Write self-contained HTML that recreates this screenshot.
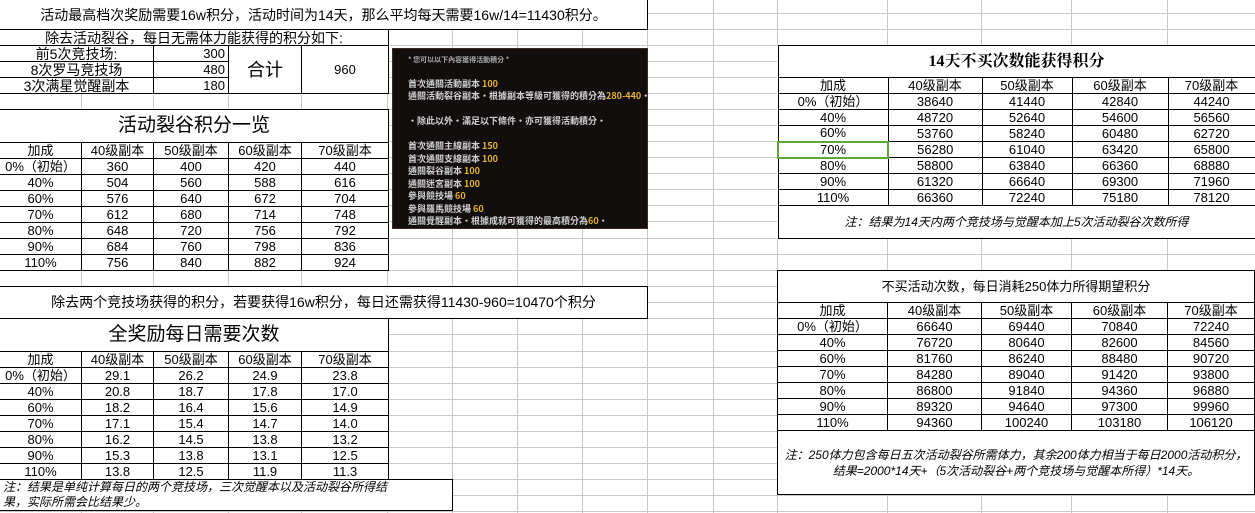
<!DOCTYPE html>
<html><head><meta charset="utf-8">
<style>
*{margin:0;padding:0;box-sizing:border-box}
body{width:1255px;height:513px;overflow:hidden;background:#fff;position:relative;font-family:"Liberation Sans","Noto Sans CJK SC",sans-serif;color:#000}
.abs{position:absolute}
table{position:absolute;border-collapse:collapse;table-layout:fixed;background:#fff}
td{border:1px solid #000;text-align:center;font-size:13px;height:16px;line-height:14px;padding:0;white-space:nowrap;overflow:hidden}
.box{position:absolute;border:1px solid #000;background:#fff;text-align:center;font-size:13px}
.img{position:absolute;left:392px;top:48px;width:256px;height:181px;background:#110e0d;border:1px solid #3a2a22;color:#d0d0d0;font-size:9px;font-weight:bold;font-family:"Noto Sans CJK TC",sans-serif}
.img div{position:absolute;left:15px;white-space:nowrap;line-height:11px}
.y{color:#e5b32c}
</style></head><body>
<svg class="abs" style="left:0;top:0" width="1255" height="513">
<g stroke="#c8c8c8" stroke-width="1">
<line x1="81.5" y1="0" x2="81.5" y2="513"/><line x1="153.5" y1="0" x2="153.5" y2="513"/><line x1="228.5" y1="0" x2="228.5" y2="513"/><line x1="301.5" y1="0" x2="301.5" y2="513"/><line x1="387.5" y1="0" x2="387.5" y2="513"/><line x1="452.5" y1="0" x2="452.5" y2="513"/><line x1="517.5" y1="0" x2="517.5" y2="513"/><line x1="582.5" y1="0" x2="582.5" y2="513"/><line x1="647.5" y1="0" x2="647.5" y2="513"/><line x1="713.5" y1="0" x2="713.5" y2="513"/><line x1="777.5" y1="0" x2="777.5" y2="513"/><line x1="887.5" y1="0" x2="887.5" y2="513"/><line x1="981.5" y1="0" x2="981.5" y2="513"/><line x1="1071.5" y1="0" x2="1071.5" y2="513"/><line x1="1167.5" y1="0" x2="1167.5" y2="513"/>
<line x1="0" y1="13.5" x2="1255" y2="13.5"/><line x1="0" y1="29.5" x2="1255" y2="29.5"/><line x1="0" y1="45.5" x2="1255" y2="45.5"/><line x1="0" y1="61.5" x2="1255" y2="61.5"/><line x1="0" y1="77.5" x2="1255" y2="77.5"/><line x1="0" y1="93.5" x2="1255" y2="93.5"/><line x1="0" y1="109.5" x2="1255" y2="109.5"/><line x1="0" y1="125.5" x2="1255" y2="125.5"/><line x1="0" y1="141.5" x2="1255" y2="141.5"/><line x1="0" y1="157.5" x2="1255" y2="157.5"/><line x1="0" y1="173.5" x2="1255" y2="173.5"/><line x1="0" y1="189.5" x2="1255" y2="189.5"/><line x1="0" y1="205.5" x2="1255" y2="205.5"/><line x1="0" y1="221.5" x2="1255" y2="221.5"/><line x1="0" y1="238.5" x2="1255" y2="238.5"/><line x1="0" y1="254.5" x2="1255" y2="254.5"/><line x1="0" y1="270.5" x2="1255" y2="270.5"/><line x1="0" y1="286.5" x2="1255" y2="286.5"/><line x1="0" y1="302.5" x2="1255" y2="302.5"/><line x1="0" y1="318.5" x2="1255" y2="318.5"/><line x1="0" y1="334.5" x2="1255" y2="334.5"/><line x1="0" y1="351.5" x2="1255" y2="351.5"/><line x1="0" y1="367.5" x2="1255" y2="367.5"/><line x1="0" y1="383.5" x2="1255" y2="383.5"/><line x1="0" y1="399.5" x2="1255" y2="399.5"/><line x1="0" y1="415.5" x2="1255" y2="415.5"/><line x1="0" y1="431.5" x2="1255" y2="431.5"/><line x1="0" y1="447.5" x2="1255" y2="447.5"/><line x1="0" y1="463.5" x2="1255" y2="463.5"/><line x1="0" y1="479.5" x2="1255" y2="479.5"/><line x1="0" y1="495.5" x2="1255" y2="495.5"/><line x1="0" y1="511.5" x2="1255" y2="511.5"/>
</g></svg>

<div class="box" style="left:-1px;top:-1px;width:649px;height:31px;line-height:30px;font-size:14px">活动最高档次奖励需要16w积分，活动时间为14天，那么平均每天需要16w/14=11430积分。</div>

<table style="left:-1px;top:29px;width:389px">
<colgroup><col style="width:154px"><col style="width:75px"><col style="width:73px"><col style="width:87px"></colgroup>
<tr><td colspan="4" style="font-size:14px">除去活动裂谷，每日无需体力能获得的积分如下:</td></tr>
<tr><td style="font-size:14px">前5次竞技场:</td><td style="text-align:right;padding-right:3px">300</td><td rowspan="3" style="font-size:18px">合计</td><td rowspan="3">960</td></tr>
<tr><td style="font-size:14px">8次罗马竞技场</td><td style="text-align:right;padding-right:3px">480</td></tr>
<tr><td style="font-size:14px">3次满星觉醒副本</td><td style="text-align:right;padding-right:3px">180</td></tr>
</table>

<table style="left:-1px;top:109px;width:389px">
<colgroup><col style="width:82px"><col style="width:72px"><col style="width:75px"><col style="width:73px"><col style="width:87px"></colgroup>
<tr><td colspan="5" style="height:33px;font-size:19px">活动裂谷积分一览</td></tr>
<tr><td>加成</td><td>40级副本</td><td>50级副本</td><td>60级副本</td><td>70级副本</td></tr>
<tr><td>0%（初始）</td><td>360</td><td>400</td><td>420</td><td>440</td></tr>
<tr><td>40%</td><td>504</td><td>560</td><td>588</td><td>616</td></tr>
<tr><td>60%</td><td>576</td><td>640</td><td>672</td><td>704</td></tr>
<tr><td>70%</td><td>612</td><td>680</td><td>714</td><td>748</td></tr>
<tr><td>80%</td><td>648</td><td>720</td><td>756</td><td>792</td></tr>
<tr><td>90%</td><td>684</td><td>760</td><td>798</td><td>836</td></tr>
<tr><td>110%</td><td>756</td><td>840</td><td>882</td><td>924</td></tr>
</table>

<div class="img">
<div style="top:6px;color:#aaa;font-size:7px">* 您可以以下內容獲得活動積分 *</div>
<div style="top:29px">首次通關活動副本 <span class="y">100</span></div>
<div style="top:41px">通關活動裂谷副本・根據副本等級可獲得的積分為<span class="y">280-440</span>・</div>
<div style="top:66px">・除此以外・滿足以下條件・亦可獲得活動積分・</div>
<div style="top:91px">首次通關主線副本 <span class="y">150</span></div>
<div style="top:104px">首次通關支線副本 <span class="y">100</span></div>
<div style="top:116px">通關裂谷副本 <span class="y">100</span></div>
<div style="top:129px">通關迷宮副本 <span class="y">100</span></div>
<div style="top:141px">參與競技場 <span class="y">60</span></div>
<div style="top:154px">參與羅馬競技場 <span class="y">60</span></div>
<div style="top:166px">通關覺醒副本・根據成就可獲得的最高積分為<span class="y">60</span>・</div>
</div>

<div class="box" style="left:-1px;top:286px;width:649px;height:33px;line-height:31px;font-size:14px">除去两个竞技场获得的积分，若要获得16w积分，每日还需获得11430-960=10470个积分</div>

<table style="left:-1px;top:318px;width:389px">
<colgroup><col style="width:82px"><col style="width:72px"><col style="width:75px"><col style="width:73px"><col style="width:87px"></colgroup>
<tr><td colspan="5" style="height:33px;font-size:19px">全奖励每日需要次数</td></tr>
<tr><td>加成</td><td>40级副本</td><td>50级副本</td><td>60级副本</td><td>70级副本</td></tr>
<tr><td>0%（初始）</td><td>29.1</td><td>26.2</td><td>24.9</td><td>23.8</td></tr>
<tr><td>40%</td><td>20.8</td><td>18.7</td><td>17.8</td><td>17.0</td></tr>
<tr><td>60%</td><td>18.2</td><td>16.4</td><td>15.6</td><td>14.9</td></tr>
<tr><td>70%</td><td>17.1</td><td>15.4</td><td>14.7</td><td>14.0</td></tr>
<tr><td>80%</td><td>16.2</td><td>14.5</td><td>13.8</td><td>13.2</td></tr>
<tr><td>90%</td><td>15.3</td><td>13.8</td><td>13.1</td><td>12.5</td></tr>
<tr><td>110%</td><td>13.8</td><td>12.5</td><td>11.9</td><td>11.3</td></tr>
</table>
<div class="box" style="left:-1px;top:479px;width:454px;height:32px;text-align:left;font-style:italic;font-size:12px;line-height:15px;padding-left:3px">注：结果是单纯计算每日的两个竞技场，三次觉醒本以及活动裂谷所得结<br>果，实际所需会比结果少。</div>

<table style="left:777px;top:45px;width:477px">
<colgroup><col style="width:110px"><col style="width:94px"><col style="width:90px"><col style="width:96px"><col style="width:87px"></colgroup>
<tr><td colspan="5" style="height:32px;font-size:16px;font-weight:bold;font-family:'Liberation Serif','Noto Serif CJK SC',serif">14天不买次数能获得积分</td></tr>
<tr><td>加成</td><td>40级副本</td><td>50级副本</td><td>60级副本</td><td>70级副本</td></tr>
<tr><td>0%（初始）</td><td>38640</td><td>41440</td><td>42840</td><td>44240</td></tr>
<tr><td>40%</td><td>48720</td><td>52640</td><td>54600</td><td>56560</td></tr>
<tr><td>60%</td><td>53760</td><td>58240</td><td>60480</td><td>62720</td></tr>
<tr><td style="border:2px solid #5ea73a">70%</td><td>56280</td><td>61040</td><td>63420</td><td>65800</td></tr>
<tr><td>80%</td><td>58800</td><td>63840</td><td>66360</td><td>68880</td></tr>
<tr><td>90%</td><td>61320</td><td>66640</td><td>69300</td><td>71960</td></tr>
<tr><td>110%</td><td>66360</td><td>72240</td><td>75180</td><td>78120</td></tr>
<tr><td colspan="5" style="height:33px;font-style:italic;font-size:12px">注：结果为14天内两个竞技场与觉醒本加上5次活动裂谷次数所得</td></tr>
</table>

<table style="left:777px;top:270px;width:477px">
<colgroup><col style="width:110px"><col style="width:94px"><col style="width:90px"><col style="width:96px"><col style="width:87px"></colgroup>
<tr><td colspan="5" style="height:32px;font-size:13px">不买活动次数，每日消耗250体力所得期望积分</td></tr>
<tr><td>加成</td><td>40级副本</td><td>50级副本</td><td>60级副本</td><td>70级副本</td></tr>
<tr><td>0%（初始）</td><td>66640</td><td>69440</td><td>70840</td><td>72240</td></tr>
<tr><td>40%</td><td>76720</td><td>80640</td><td>82600</td><td>84560</td></tr>
<tr><td>60%</td><td>81760</td><td>86240</td><td>88480</td><td>90720</td></tr>
<tr><td>70%</td><td>84280</td><td>89040</td><td>91420</td><td>93800</td></tr>
<tr><td>80%</td><td>86800</td><td>91840</td><td>94360</td><td>96880</td></tr>
<tr><td>90%</td><td>89320</td><td>94640</td><td>97300</td><td>99960</td></tr>
<tr><td>110%</td><td>94360</td><td>100240</td><td>103180</td><td>106120</td></tr>
<tr><td colspan="5" style="height:64px;font-style:italic;font-size:12px;line-height:16px;white-space:normal">注：250体力包含每日五次活动裂谷所需体力，其余200体力相当于每日2000活动积分，<br>结果=2000*14天+（5次活动裂谷+两个竞技场与觉醒本所得）*14天。</td></tr>
</table>
</body></html>
